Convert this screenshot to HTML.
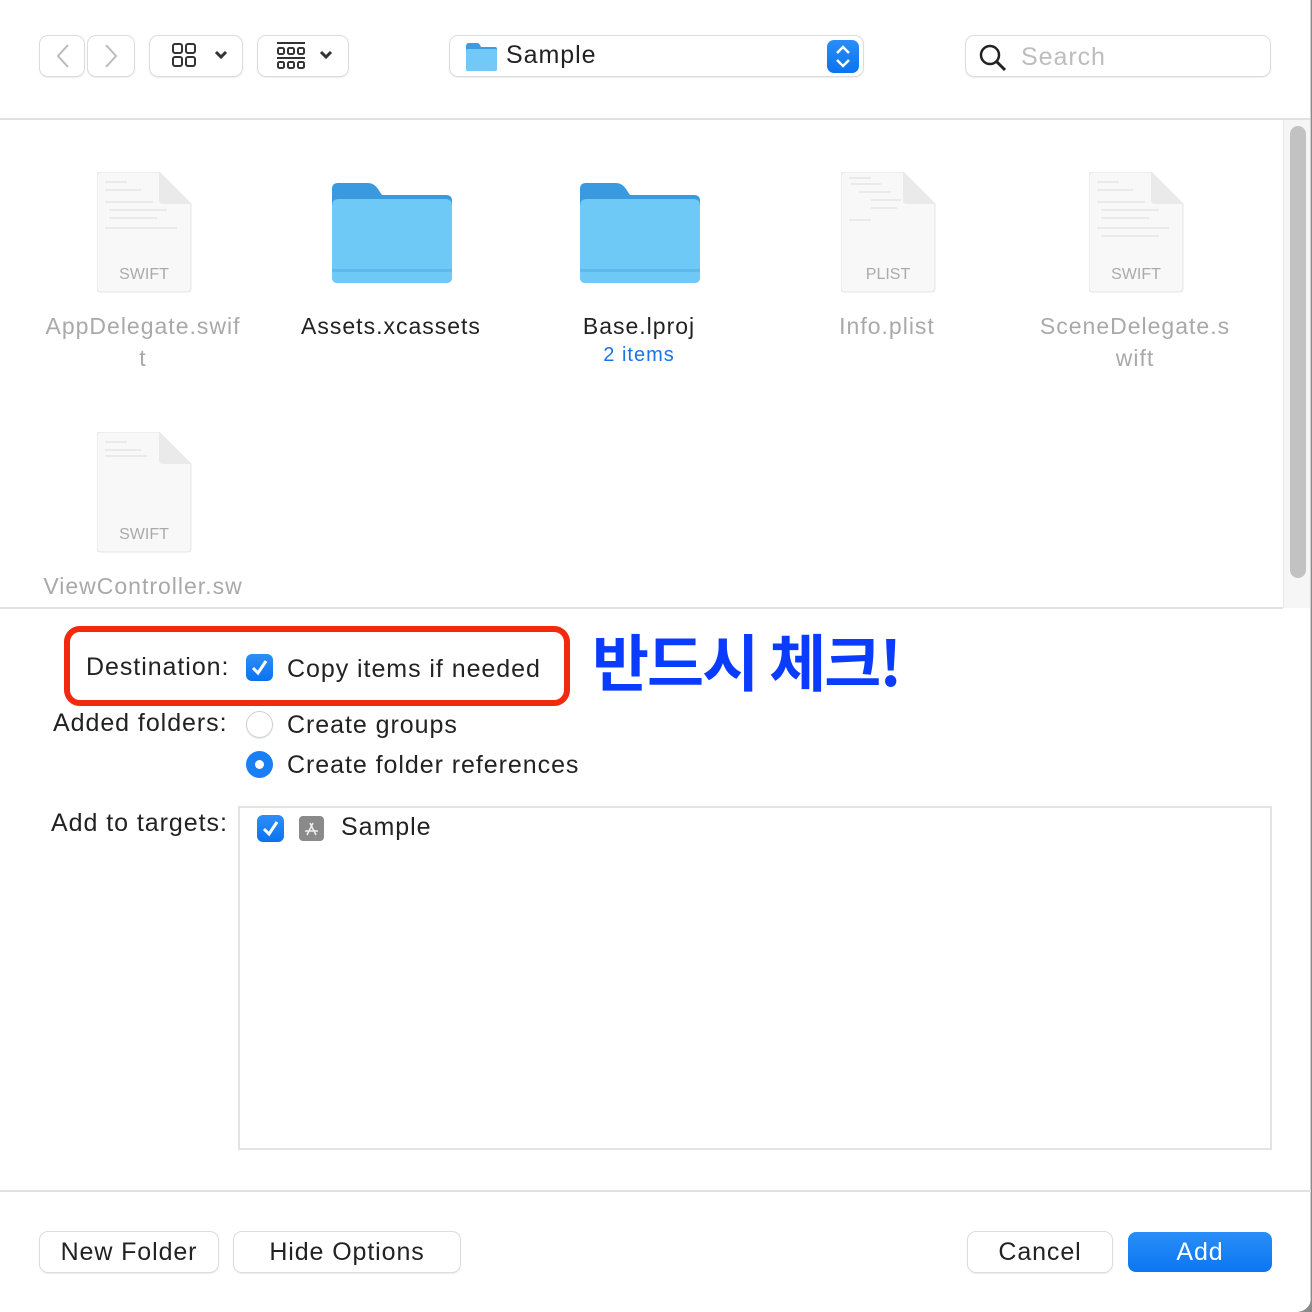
<!DOCTYPE html>
<html><head><meta charset="utf-8"><style>
*{margin:0;padding:0;box-sizing:border-box}
body{width:1312px;height:1312px;overflow:hidden;background:#8a8a8a;font-family:"Liberation Sans","Noto Sans CJK KR",sans-serif;position:relative}
#win{position:absolute;left:0;top:0;width:1311px;height:1312px;background:#fff;border-bottom-right-radius:14px;overflow:hidden}
.a{position:absolute}
.btn{position:absolute;background:#fff;border-radius:8px;box-shadow:0 0 0 1px #dcdcdc,0 1px 2px rgba(0,0,0,.18)}
.lbl{position:absolute;text-align:center;font-size:23px;line-height:32px;width:220px;letter-spacing:1px}
.g{color:#a9a9a9}.d{color:#222}
.t{position:absolute;font-size:25px;color:#222;line-height:30px;letter-spacing:0.95px;white-space:nowrap}
.cb{position:absolute;width:27px;height:27px;border-radius:6px;background:linear-gradient(#2f8ff8,#0a72f0)}
.pb{position:absolute;font-size:25px;color:#222;text-align:center;line-height:40px;letter-spacing:0.9px}
</style></head><body><div id="win">
<!-- toolbar -->
<div class="btn" style="left:40px;top:36px;width:44px;height:40px"></div>
<div class="btn" style="left:88px;top:36px;width:46px;height:40px"></div>
<svg class="a" style="left:40px;top:36px" width="96" height="40"><path d="M28 9 L18 20 L28 31" fill="none" stroke="#bbb" stroke-width="2"/><path d="M66 9 L76 20 L66 31" fill="none" stroke="#bbb" stroke-width="2"/></svg>
<div class="btn" style="left:150px;top:36px;width:92px;height:40px"></div>
<svg class="a" style="left:150px;top:36px" width="92" height="40"><g fill="none" stroke="#333" stroke-width="2"><rect x="23" y="8" width="9" height="9" rx="2"/><rect x="36" y="8" width="9" height="9" rx="2"/><rect x="23" y="21" width="9" height="9" rx="2"/><rect x="36" y="21" width="9" height="9" rx="2"/><path d="M66 16 L71 21 L76 16" stroke-width="3"/></g></svg>
<div class="btn" style="left:258px;top:36px;width:90px;height:40px"></div>
<svg class="a" style="left:258px;top:36px" width="90" height="40"><g fill="none" stroke="#333" stroke-width="2"><path d="M19 7 H47 M19 22 H47"/><rect x="20" y="12" width="6" height="6" rx="1.5"/><rect x="30" y="12" width="6" height="6" rx="1.5"/><rect x="40" y="12" width="6" height="6" rx="1.5"/><rect x="20" y="26" width="6" height="6" rx="1.5"/><rect x="30" y="26" width="6" height="6" rx="1.5"/><rect x="40" y="26" width="6" height="6" rx="1.5"/><path d="M63 16 L68 21 L73 16" stroke-width="3"/></g></svg>
<div class="btn" style="left:450px;top:36px;width:413px;height:40px"></div>
<svg class="a" style="left:466px;top:43px" width="32" height="28"><path d="M3 0 H11 Q13 0 14 2 L15 4 H29 Q31 4 31 6 V26 Q31 28 29 28 H2 Q0 28 0 26 V3 Q0 0 3 0Z" fill="#3b9be3"/><rect x="0" y="6" width="31" height="22" rx="2" fill="#72c9f7"/></svg>
<div class="t" style="left:506px;top:40px;font-size:25px">Sample</div>
<div class="a" style="left:827px;top:40px;width:32px;height:33px;border-radius:7px;background:linear-gradient(#2a8ef8,#0a74f0)"></div>
<svg class="a" style="left:827px;top:40px" width="32" height="33"><path d="M10 13 L16 7 L22 13 M10 20 L16 26 L22 20" fill="none" stroke="#fff" stroke-width="2.5"/></svg>
<div class="btn" style="left:966px;top:36px;width:304px;height:40px"></div>
<svg class="a" style="left:978px;top:43px" width="30" height="30"><circle cx="12" cy="12" r="9" fill="none" stroke="#222" stroke-width="2.5"/><path d="M19 19 L27 27" stroke="#222" stroke-width="3"/></svg>
<div class="t" style="left:1021px;top:42px;color:#bdbdbd;font-size:25px">Search</div>
<div class="a" style="left:0;top:118px;width:1312px;height:2px;background:#e2e2e2"></div>
<!-- scrollbar -->
<div class="a" style="left:1283px;top:120px;width:28px;height:488px;background:#f6f6f6;border-left:1px solid #e8e8e8"></div>
<div class="a" style="left:1290px;top:126px;width:16px;height:452px;border-radius:8px;background:#c2c2c2"></div>
<div class="a" style="left:1310px;top:0;width:2px;height:1312px;background:#d0d0d0"></div>
<div class="a" style="left:0;top:607px;width:1283px;height:2px;background:#e2e2e2"></div>
<!-- files -->
<svg class="a" style="left:97px;top:172px" width="96" height="122"><path d="M4 0 H62 L94 32 V116 Q94 120 90 120 H4 Q0 120 0 116 V4 Q0 0 4 0Z" fill="#f8f8f8" stroke="#e4e4e4"/><path d="M62 0 V28 Q62 32 66 32 H94Z" fill="#eaeaea"/><g stroke="#ddd"><path d="M8 10H30M8 18H44M8 30H56M12 38H70M12 46H60M8 56H80"/></g><text x="47" y="107" font-size="16" fill="#aaa" text-anchor="middle" font-family="Liberation Sans">SWIFT</text></svg>
<div class="lbl g" style="left:33px;top:310px">AppDelegate.swif<br>t</div>
<svg class="a" style="left:332px;top:183px" width="120" height="101"><path d="M6 0 H36 Q42 0 46 6 L50 12 H114 Q120 12 120 18 V94 Q120 100 114 100 H6 Q0 100 0 94 V6 Q0 0 6 0Z" fill="#3a9ae0"/><rect x="0" y="16" width="120" height="84" rx="6" fill="#6ec9f7"/><rect x="0" y="86" width="120" height="3" fill="#5fb8ea"/></svg>
<div class="lbl d" style="left:281px;top:310px">Assets.xcassets</div>
<svg class="a" style="left:580px;top:183px" width="120" height="101"><path d="M6 0 H36 Q42 0 46 6 L50 12 H114 Q120 12 120 18 V94 Q120 100 114 100 H6 Q0 100 0 94 V6 Q0 0 6 0Z" fill="#3a9ae0"/><rect x="0" y="16" width="120" height="84" rx="6" fill="#6ec9f7"/><rect x="0" y="86" width="120" height="3" fill="#5fb8ea"/></svg>
<div class="lbl d" style="left:529px;top:310px">Base.lproj</div>
<div class="lbl" style="left:529px;top:341px;color:#1a73e8;font-size:20px;line-height:28px">2 items</div>
<svg class="a" style="left:841px;top:172px" width="96" height="122"><path d="M4 0 H62 L94 32 V116 Q94 120 90 120 H4 Q0 120 0 116 V4 Q0 0 4 0Z" fill="#f8f8f8" stroke="#e4e4e4"/><path d="M62 0 V28 Q62 32 66 32 H94Z" fill="#eaeaea"/><g stroke="#ddd"><path d="M8 6H30M10 12H40M18 20H50M30 28H60M30 36H56M8 48H30"/></g><text x="47" y="107" font-size="16" fill="#aaa" text-anchor="middle" font-family="Liberation Sans">PLIST</text></svg>
<div class="lbl g" style="left:777px;top:310px">Info.plist</div>
<svg class="a" style="left:1089px;top:172px" width="96" height="122"><path d="M4 0 H62 L94 32 V116 Q94 120 90 120 H4 Q0 120 0 116 V4 Q0 0 4 0Z" fill="#f8f8f8" stroke="#e4e4e4"/><path d="M62 0 V28 Q62 32 66 32 H94Z" fill="#eaeaea"/><g stroke="#ddd"><path d="M8 10H30M8 18H44M8 30H56M12 38H70M12 46H60M8 56H80M12 64H70"/></g><text x="47" y="107" font-size="16" fill="#aaa" text-anchor="middle" font-family="Liberation Sans">SWIFT</text></svg>
<div class="lbl g" style="left:1025px;top:310px">SceneDelegate.s<br>wift</div>
<svg class="a" style="left:97px;top:432px" width="96" height="122"><path d="M4 0 H62 L94 32 V116 Q94 120 90 120 H4 Q0 120 0 116 V4 Q0 0 4 0Z" fill="#f8f8f8" stroke="#e4e4e4"/><path d="M62 0 V28 Q62 32 66 32 H94Z" fill="#eaeaea"/><g stroke="#ddd"><path d="M8 10H30M8 18H44M8 24H50"/></g><text x="47" y="107" font-size="16" fill="#aaa" text-anchor="middle" font-family="Liberation Sans">SWIFT</text></svg>
<div class="lbl g" style="left:33px;top:570px">ViewController.sw</div>
<!-- options -->
<div class="a" style="left:64px;top:626px;width:506px;height:80px;border:6px solid #f2290c;border-radius:16px"></div>
<div class="t" style="left:86px;top:652px">Destination:</div>
<div class="cb" style="left:246px;top:654px"></div>
<svg class="a" style="left:246px;top:654px" width="27" height="27"><path d="M7 14 L12 19 L20 7" fill="none" stroke="#fff" stroke-width="3"/></svg>
<div class="t" style="left:287px;top:654px">Copy items if needed</div>
<div class="a" style="left:592px;top:624px;font-size:62px;line-height:70px;font-weight:700;color:#0a3cff;font-family:'Noto Sans CJK KR',sans-serif;letter-spacing:-2px;white-space:nowrap">반드시 체크!</div>
<div class="t" style="left:53px;top:708px">Added folders:</div>
<div class="a" style="left:246px;top:711px;width:27px;height:27px;border-radius:50%;border:1px solid #cfcfcf;box-shadow:0 1px 1px rgba(0,0,0,.1)"></div>
<div class="t" style="left:287px;top:710px">Create groups</div>
<div class="a" style="left:246px;top:751px;width:27px;height:27px;border-radius:50%;background:#1a7ef5"></div>
<div class="a" style="left:255px;top:760px;width:9px;height:9px;border-radius:50%;background:#fff"></div>
<div class="t" style="left:287px;top:750px">Create folder references</div>
<div class="t" style="left:51px;top:808px">Add to targets:</div>
<div class="a" style="left:238px;top:806px;width:1034px;height:344px;border:2px solid #e3e3e3"></div>
<div class="cb" style="left:257px;top:815px"></div>
<svg class="a" style="left:257px;top:815px" width="27" height="27"><path d="M7 14 L12 19 L20 7" fill="none" stroke="#fff" stroke-width="3"/></svg>
<div class="a" style="left:299px;top:816px;width:25px;height:25px;border-radius:4px;background:#8a8a8a"></div>
<svg class="a" style="left:299px;top:816px" width="25" height="25"><path d="M8 19 L14 7 M17 19 L11 7 M6 15 H19" stroke="#eee" stroke-width="1.6" fill="none"/></svg>
<div class="t" style="left:341px;top:812px">Sample</div>
<div class="a" style="left:0;top:1190px;width:1312px;height:2px;background:#e2e2e2"></div>
<!-- bottom buttons -->
<div class="btn pb" style="left:40px;top:1232px;width:178px;height:40px">New Folder</div>
<div class="btn pb" style="left:234px;top:1232px;width:226px;height:40px">Hide Options</div>
<div class="btn pb" style="left:968px;top:1232px;width:144px;height:40px">Cancel</div>
<div class="a pb" style="left:1128px;top:1232px;width:144px;height:40px;border-radius:8px;background:linear-gradient(#2a8ef8,#0a76f2);color:#fff">Add</div>
</div></body></html>
